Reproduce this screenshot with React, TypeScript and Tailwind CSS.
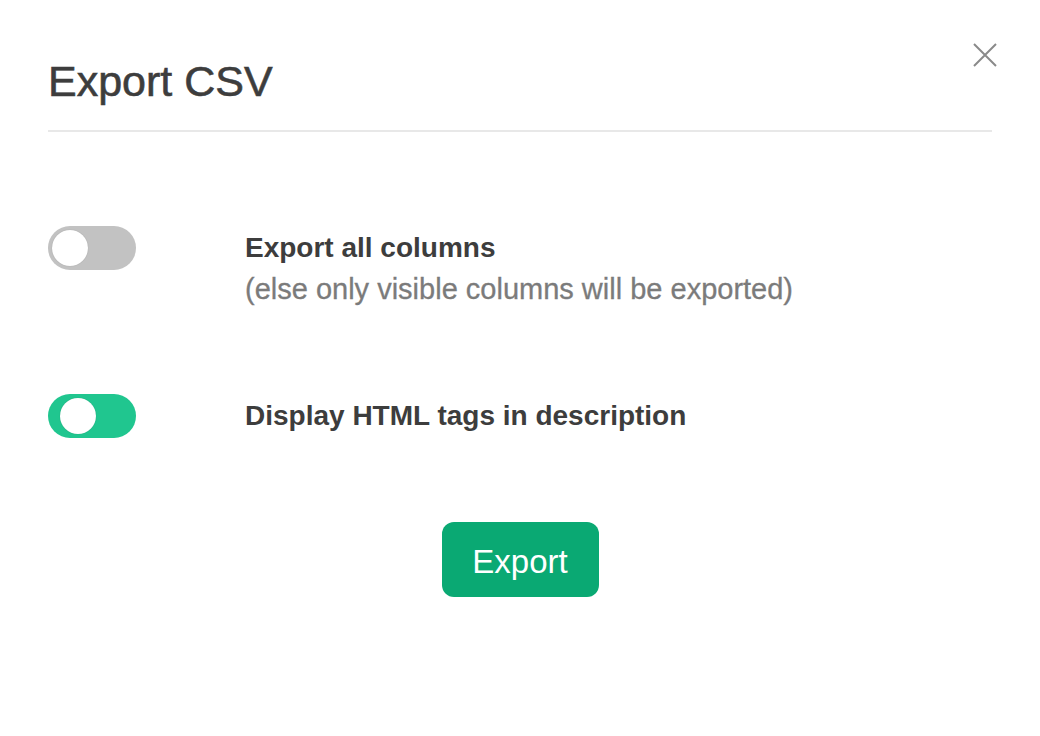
import { useState } from 'react';

function Toggle({ on }: { on: boolean }) {
  return (
    <div
      className={
        'w-[88px] h-[44px] rounded-full shrink-0 flex items-center ' +
        (on ? 'bg-[#20c68f] pl-[12px]' : 'bg-[#c2c2c2] pl-[4px]')
      }
    >
      <div className="w-[36px] h-[36px] rounded-full bg-white shadow-[0_0_1px_rgba(0,0,0,0.25)]" />
    </div>
  );
}

export default function App() {
  const [allCols] = useState(false);
  const [htmlTags] = useState(true);

  return (
    <div className="w-[1040px] h-[736px] bg-white font-['Liberation_Sans',Arial,sans-serif] relative">
      <button className="absolute left-[973px] top-[43px] w-[24px] h-[24px] text-[#8a8a8a]">
        <svg viewBox="0 0 24 24" width="24" height="24" fill="none" stroke="currentColor" strokeWidth="2">
          <path d="M1 1 L23 23 M23 1 L1 23" />
        </svg>
      </button>

      <div className="px-[48px] pt-[60px]">
        <h1 className="text-[43px] leading-none text-[#3d3d3d] [-webkit-text-stroke:0.6px_#3d3d3d]">Export CSV</h1>
        <div className="mt-[27px] h-[2px] bg-[#e8e8e8]" />

        <div className="mt-[94px] flex items-start">
          <div className="w-[197px] shrink-0">
            <Toggle on={allCols} />
          </div>
          <div>
            <div className="text-[28px] leading-[44px] font-bold text-[#3d3d3d]">Export all columns</div>
            <div className="mt-[5px] text-[29px] leading-[28px] text-[#7b7b7b] [-webkit-text-stroke:0.3px_#7b7b7b]">
              (else only visible columns will be exported)
            </div>
          </div>
        </div>

        <div className="mt-[91px] flex items-start">
          <div className="w-[197px] shrink-0">
            <Toggle on={htmlTags} />
          </div>
          <div className="text-[28px] leading-[44px] font-bold text-[#3d3d3d]">
            Display HTML tags in description
          </div>
        </div>

        <div className="mt-[84px] flex justify-center">
          <button className="w-[157px] h-[75px] pt-[4px] rounded-[12px] bg-[#0aa973] text-white text-[33px]">
            Export
          </button>
        </div>
      </div>
    </div>
  );
}
